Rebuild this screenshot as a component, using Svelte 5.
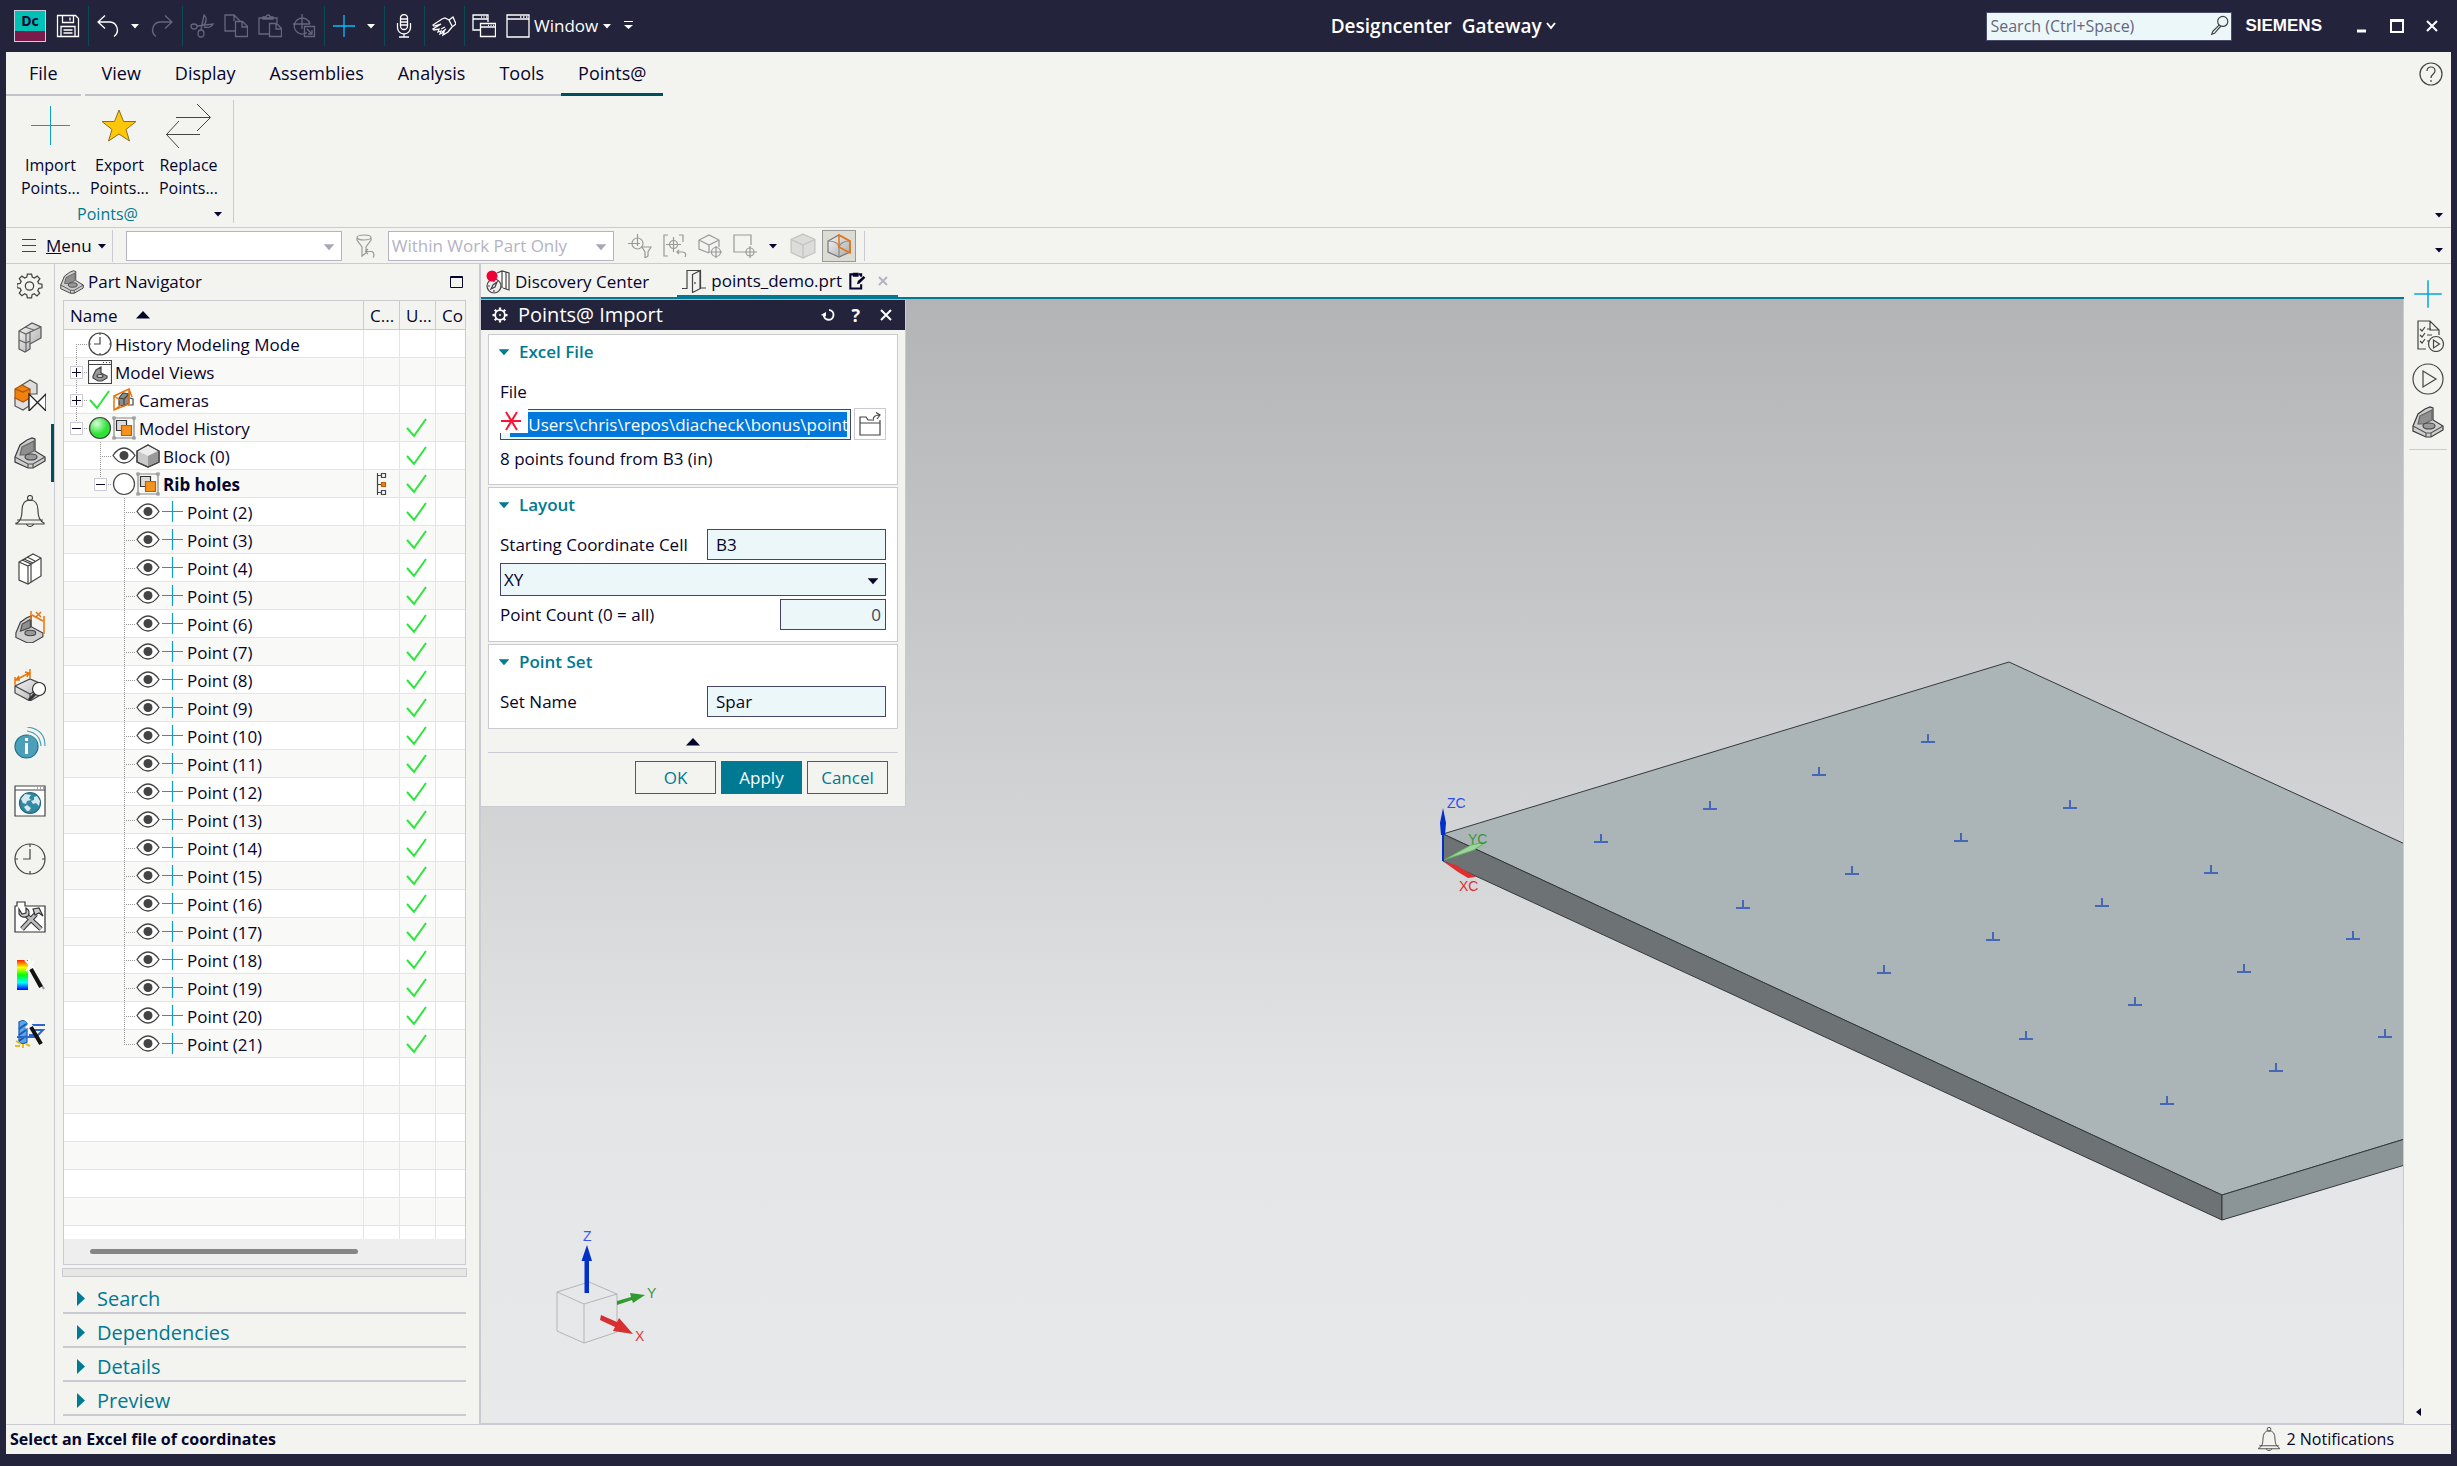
<script>
  const icons = {
    save: '<path d="M1.5 1.5h18l3 3v18h-21zM6.5 1.5v7h11v-7M14 3.500v3M5 22v-9.500h14V22M7.500 16h9M7.500 19h9"/>',
    undo: '<path d="M9 1.500L2 8l7 6.500M2 8h12a8 8 0 0 1 4 14.500"/>',
    redo: '<path d="M15 1.500L22 8l-7 6.500M22 8H10a8 8 0 0 0-4 14.500"/>',
    cut: '<ellipse cx="4" cy="12.500" rx="3" ry="2.500"/><ellipse cx="11" cy="19.500" rx="3" ry="3.500"/><path d="M7 12l16-2c-2 4-5 4-9 3M11 16L14 1c3 3 3 6 0 10"/>',
    copy: '<path d="M11 17H1V1h9l6 6M10 1v6M11.500 7.500h7l5 5v10h-12zM18 8v5h5"/>',
    paste: '<path d="M11 20H1V4h18v5M5 5V3h3a2 2 0 0 1 4 0h3v2zM11.500 9.500h7l5 5v8h-12zM18 10v5h5"/>',
    target: '<path d="M10 0v15M1 10h17M15 18.500A8 8 0 1 1 18 10M12.500 12.500h10v10h-10zM15 15l5 5M20 16v4h-4"/>',
    plus: '<path d="M12 1v22M1 12h22"/>',
    mic: '<rect x="8.500" y="0.500" width="7" height="15" rx="3.500"/><path d="M8.500 5h7M8.500 8h7M8.500 11h7M5.500 9v4.500a6.500 6.500 0 0 0 13 0V9M12 20v3M7 23h10"/>',
    hand: '<path d="M1 11l9-6 3-1 4 2 4-3 3 7-4 3-4 5-5 3 1-3-4 2 1-3-3 1 1-3-5 1-1-1 8-5-7 2zM10 18l4-3M9 15l4-2M17 6l3 6"/>',
    windows: '<path d="M8 16H1V1h15v7M1 5h15M9 3h1M11.500 3h1M14 3h1M8.500 9.500h15v13h-15zM8.500 13h15M16 11.300h1M18.500 11.300h1M21 11.300h1"/>',
    window: '<path d="M1 1h22v22H1zM1 5h22M14 3h1.500M17 3h1.500M20 3h1.500"/>',
    funnelBack: '<path d="M3 4v2l5 7v9l4-3v-6l5-7V4M14 15l-2.500 2.500L14 20M12 17.500h6a4 4 0 0 1 1 6"/><ellipse cx="10" cy="3.500" rx="7" ry="2.500"/>',
    targetFunnel: '<circle cx="9.500" cy="9.500" r="5.500"/><path d="M9.500 0v12M0 9.500h12M14 13h9l-3 5v4l-3 2v-6z"/>',
    bracketTarget: '<path d="M5 1H1v21h4M16 1h4v7M16 16l-2 2 2 2M14 18h6q4 1 2 5"/><circle cx="10.500" cy="10.500" r="4"/><path d="M10.500 3v15M3 10.500h15"/>',
    cubeTarget: '<path d="M11 19L1 15V6l10-5 10 5v7M1 6l10 5 10-5M11 11v8"/><circle cx="18" cy="18" r="4.500"/><path d="M18 12v12M12 18h12"/>',
    boxTarget: '<path d="M11 18H1V1h17v10"/><circle cx="17" cy="18" r="4"/><path d="M17 12v12M11 18h13"/>',
    greyCube: '<path fill="#dcdcda" stroke="#c4c4c2" d="M12 1l11 5v12l-11 5-11-5V6z"/><path stroke="#c4c4c2" d="M1 6l11 5 11-5M12 11v12"/>',
    sectionCube: '<path fill="url(#metal)" stroke="#777" d="M12 1l11 6v11l-11 5-11-5V7z"/><path stroke="#888" d="M1 7q10 0 11 6 2-6 11-6M12 13v10"/><path stroke="#e8740c" stroke-width="1.500" d="M12 1v12l11 6V7z"/>',
    gear: '<path d="M10 1h4l.7 3 2 .9L19.400 3 22 5.500 20 8.300l1 2 3 .5v3.400l-3 .6-1 2 1.800 2.700-2.600 2.500L16.500 20l-2 .9L14 24h-4l-.6-3-2-1-2.700 1.800L2.200 19.300 4 16.700l-1-2L0 14v-3.500L3 10l1-2-1.800-2.700L4.700 3l2.700 1.800 2-.8z"/><circle cx="12" cy="12.500" r="4"/>',
    bracket: '<path fill="#cfcfcf" stroke="#3a3a3a" d="M1 20L6 8 13 3l5-2 3 1v12l10 6v4l-12 7h-5L1 25z"/><path fill="#8f8f8f" stroke="#666" d="M6 18l2-8 12-6v10l-8 4z"/><path stroke="#555" d="M1 20l13 7h5l12-7M14 27v4M19 27v4"/><ellipse cx="17" cy="20" rx="6" ry="3" fill="#999" stroke="#444"/>',
    blocks: '<path fill="url(#metal)" stroke="#555" d="M5 10L18 2l9 4v11l-11 6v5l-5 3-6-3z"/><path stroke="#666" d="M5 10l7 3 15-7M12 13l4-2v12M12 13v17M5 19l7 3 4-2M11 6l9 3"/>',
    assembly: '<path fill="#ddd" stroke="#555" d="M8 6l8-5 7 4v10H8z"/><path fill="#e0e0e0" stroke="#555" d="M1 19h14v8l-6 4-8-4z"/><path fill="#f08010" stroke="#a8560a" d="M1 10l7-4 8 4v9l-7 4-8-4z"/><path stroke="#a8560a" d="M1 10l8 3 7-3"/><path fill="#fff" stroke="#222" stroke-width="1.300" d="M15 15v17l17-17v17z"/>',
    bell: '<path d="M3 28q5-3 5-12 0-11 8-11t8 11q0 9 6 12v1H2v-1zM3 25h26M12 29q4 5 8 0"/><circle cx="16" cy="3" r="2.500"/>',
    books: '<path fill="#fff" d="M5 9l14-8 8 4v18L14 31l-9-4z"/><path d="M5 9l9 4 13-8M14 13v18M8 7l9 4v18M10 6l9 4M13 4l8 4"/>',
    bracketDim: '<g transform="translate(1 4) scale(.9)"><path fill="#cfcfcf" stroke="#3a3a3a" d="M1 20L6 8 13 3l5-2v12l13 7v4l-12 7h-5L1 25z"/><path fill="#8f8f8f" d="M6 18l2-8 9-5v9z"/><ellipse cx="17" cy="20" rx="6" ry="3" fill="#999" stroke="#444"/></g><path stroke="#e8740c" stroke-width="1.500" d="M17 0v9M30 5v18M18 4l11 6M22 1l5 5M27 1l-5 5"/>',
    measure: '<path fill="url(#metal)" stroke="#444" d="M1 17l15-7 14 6v8l-14 8-15-8z"/><path stroke="#444" d="M1 17l15 8 14-8M16 25v7"/><path stroke="#e8740c" stroke-width="1.500" d="M1 8v8M16 0v9M2 11l13-7M5 7l-3 4h4M11 3l4 1-2 4"/><path stroke="#333" stroke-width="3" d="M21 25l-6 6"/><circle cx="25" cy="20" r="6.500" fill="#fff" stroke="#333"/>',
    info: '<circle cx="12.500" cy="19.500" r="11.500" fill="#4c9fb8" stroke="#1d6f88"/><path stroke="#fff" stroke-width="3" d="M12.500 11v3M12.500 16v11"/><path stroke="#4c9fb8" d="M13 0q18 2 18 19M13 4q13 2 14 15M14 8q8 2 9 10"/>',
    web: '<path fill="#fff" stroke="#444" d="M1 1h30v30H1z"/><path stroke="#444" d="M1 5h30M23 3h1M26 3h1M29 3h1"/><circle cx="16" cy="18" r="10.500" fill="#308aa3" stroke="#22697c"/><path fill="#d9e8ee" stroke="none" d="M7 14l4-5 6 1-2 3 2 2-4 1-1 3-3-1zM20 12l3-1 3 5-1 5-3-3-3 1-2-3 3-1zM10 22l3-2 4 3-2 3h-2z"/>',
    clock: '<circle cx="16" cy="16" r="15"/><path d="M16 6v10H9M16 1v3M16 28v3M1 16h3M28 16h3"/>',
    tools: '<path fill="#fff" stroke="#333" d="M1 5h2V1h8v4h20v26H1z"/><path stroke="#333" stroke-width="5" d="M8 28l14-15M11 13l16 15"/><path stroke="#bbb" stroke-width="3" d="M8 28l14-15M11 13l16 15"/><path stroke="#333" fill="#ccc" d="M5 8l3 5 4-1V7q5 3 2 8-6 3-9-2zM19 8l6-1 4 8-4-3-4 2z"/>',
    rainbow: '<rect x="3" y="1" width="11" height="30" fill="url(#spectrum)" stroke="none"/><path stroke="#fff" stroke-width="2" d="M11 1l10 10M20 2L12 12M15 0v13"/><path stroke="#999" stroke-width="2" d="M19 12l11 18"/><path stroke="#111" stroke-width="4" d="M17 10l10 18"/>',
    mill: '<path fill="#58a7ee" stroke="#1d5ab0" d="M5 5q4-3 8 0v20q-4 3-8 0z"/><path stroke="#1d5ab0" stroke-width="2" d="M5 12l7-5M5 18l7-5M5 24l7-5"/><path stroke="#2d66c8" stroke-width="2" d="M16 8h15M18 13h11l-5 5h-9M3 20h20"/><path stroke="#e7bd25" stroke-width="2" d="M2 24l5 3M1 29h5M9 27v4M12 27l4 2"/><path stroke="#fff" stroke-width="2" d="M11 2l10 10M19 3l-7 8"/><path stroke="#111" stroke-width="4" d="M17 10l10 17"/>',
    checklist: '<path d="M14 29H6V1h12l9 9v5M18 1v9h9M8 9l2 2 3-4M15 9h4M8 15l2 2 3-4M15 15h5M8 21l2 2 3-4M15 21h2"/><circle cx="24" cy="24" r="7.500"/><path d="M21.500 20v8l6-4z"/>',
    play: '<circle cx="16" cy="16" r="15"/><path d="M11 8v16l13-8z"/>',
    history: '<circle cx="12" cy="12" r="11" fill="#fff"/><path d="M12 5v7H6M12 1v2M12 21v2M1 12h2M21 12h2"/>',
    views: '<path fill="#fff" d="M.5.500h23v23H.500z"/><path d="M.5 4.500h23M15 2.500h1M18 2.500h1M21 2.500h1"/><path fill="#999" d="M5 16l3-6 5-3v6l6 3v2l-5 3h-4l-5-3z"/><ellipse cx="12" cy="16" rx="3" ry="1.500" fill="#ddd"/>',
    check: '<path stroke="#2be53b" stroke-width="2" d="M2 12l7 8L21 3"/>',
    camera: '<path fill="#8c8c8c" stroke="#444" d="M7 10l4-5 6 1v9l-5 3-5-1z"/><path stroke="#444" d="M7 10l5 1v7M12 11l5-5M18 10l3 1v6h-5"/><path stroke="#e8740c" stroke-width="1.500" d="M2 8L17 1v15L2 22zM2 8l6 4M17 1l3 8M2 22l7-5"/>',
    ball: '<circle cx="12" cy="12" r="10.500" fill="url(#ball)"/>',
    ring: '<circle cx="12" cy="12" r="10.500" fill="#fff"/>',
    feature: '<path stroke="#888" d="M2 2h20v20H2z"/><path fill="#fff" stroke="#888" d="M1 1h2v2H1zM21 1h2v2h-2zM1 21h2v2H1zM21 21h2v2h-2z"/><path fill="#ddd" stroke="#333" d="M4.500 4.500h10v10h-10z"/><path fill="#f4921e" stroke="#c85a00" d="M9.500 9.500h10v10h-10z"/>',
    eye: '<path stroke-width="1.300" d="M1 11.500Q6 4 12 4t11 7.500Q18 19 12 19T1 11.500z" fill="#fff"/><circle cx="12" cy="11.500" r="4.500" fill="#444" stroke="none"/>',
    block: '<path fill="#cacaca" d="M12 1l11 6v11l-11 5-11-5V7z"/><path fill="#ededed" stroke="none" d="M12 1.500L22 7l-10 5L2 7z"/><path fill="#999" stroke="none" d="M12 12l10-5v10.500L12 22z"/><path d="M12 1l11 6v11l-11 5-11-5V7z"/>',
    point: '<path stroke="#0f9fc4" d="M12.500 1v21M2 11.500h21"/>',
    deps: '<path d="M8.500 1v22M9 3.500h3M9 12.500h3M9 20.500h3M12.500 1.500h4v4h-4zM12.500 18.500h4v4h-4z"/><path fill="#f08010" stroke="#c85a00" d="M12.500 10.500h4v4h-4z"/>',
    discovery: '<path fill="#fff" d="M11 3l5-2 7 2v17l-6-2M16 1v17M20 2v17"/><circle cx="8" cy="16" r="7" fill="#eee"/><path d="M5 19l2-4 4-3-2 5zM8 10v2M8 20v2M2 16h2"/><circle cx="6" cy="6" r="5.500" fill="#f00035" stroke="none"/>',
    door: '<path d="M0 19.500h5V1.500h13V19h6M10.500 5.500l8-4v18l-8 4z"/><path d="M13 13v2"/>',
    edit: '<path stroke="#05052d" stroke-width="2.500" d="M11 4H4v17h13v-5M17 7V4h-3"/><path fill="#05052d" stroke="none" d="M7 2h7v5H7zM12 16l1-4 7-6 2 2-7 7z"/>',
    folder: '<path d="M2 22V5h6l2 3h4M2 11h20v12H2zM22 11V8M15 9q0-6 6-6M18 .5L22 3l-3 4"/>',
    search: '<circle cx="15" cy="7" r="5.500"/><path d="M11 11l-7 7M13 12l-7 8-3 1 1-3"/>',
    help: '<circle cx="12" cy="12" r="11"/><path d="M8 9q0-4 4-4t4 4c0 3-4 3-4 7M12 18v2"/>',
    reset: '<path stroke-width="2.500" d="M12 5.500h1A6.500 6.500 0 1 1 5 12"/><path fill="#fff" stroke="none" d="M1 12l7-4v6z"/>',
    settings: '<circle cx="12" cy="12" r="6.500" stroke-width="2.500"/><circle cx="12" cy="12" r="1.200" fill="#fff" stroke="none"/><path stroke-width="3" d="M12 2v3M12 19v3M2 12h3M19 12h3M5 5l2 2M17 17l2 2M5 19l2-2M17 7l2-2"/>',
  };

  const quickGroups = [
    ["undo", "caret", "redo"],
    ["cut", "copy", "paste", "target"],
    ["plus", "caret"],
    ["mic"],
    ["hand"],
  ];
  const disabled = ["redo", "cut", "copy", "paste", "target"];
  const tabs = ["View", "Display", "Assemblies", "Analysis", "Tools", "Points@"];
  const rail = [
    "blocks", "assembly", "bracket", "bell", "books", "bracketDim", "measure",
    "info", "web", "clock", "tools", "rainbow", "mill",
  ];

  const rows = [
    { depth: 0, icons: ["history"], name: "History Modeling Mode", first: true },
    { depth: 0, icons: ["views"], name: "Model Views", toggle: "+" },
    { depth: 0, icons: ["check", "camera"], name: "Cameras", toggle: "+" },
    { depth: 0, icons: ["ball", "feature"], name: "Model History", toggle: "-", last: true, ok: true },
    { depth: 1, icons: ["eye", "block"], name: "Block (0)", ok: true },
    { depth: 1, icons: ["ring", "feature"], name: "Rib holes", toggle: "-", last: true, ok: true, bold: true },
  ];
  for (let n = 2; n <= 21; n++) {
    rows.push({ depth: 2, icons: ["eye", "point"], name: `Point (${n})`, ok: true, last: n === 21 });
  }
  const emptyRows = Array(7).fill(0);
  const sections = ["Search", "Dependencies", "Details", "Preview"];

  // hole positions, 4 across the plate and 5 along it
  const points = [];
  for (let j = 0; j < 5; j++) {
    for (let i = 0; i < 4; i++) {
      points.push({ x: Math.round(1120 + i * 109 + j * 141.6), y: Math.round(543 - i * 33.3 + j * 65.5) });
    }
  }

  let fileName = $state("\\Users\\chris\\repos\\diacheck\\bonus\\point");
  let startCell = $state("B3");
  let plane = $state("XY");
  let count = $state("0");
  let setName = $state("Spar");
</script>

{#snippet icon(name, size = 24, box = 24)}
  <svg class="icon" width={size} height={size} viewBox="0 0 {box} {box}" aria-hidden="true">{@html icons[name]}</svg>
{/snippet}

{#snippet caret(dir = "down")}
  <svg class="caret {dir}" width="10" height="6" viewBox="0 0 10 6" aria-hidden="true"><path d="M1 1h8L5 5.500z" /></svg>
{/snippet}

<svg width="0" height="0" class="defs" aria-hidden="true">
  <defs>
    <linearGradient id="metal" x1="0" y1="0" x2="1" y2="1">
      <stop offset="0" stop-color="#f6f6f6" />
      <stop offset="1" stop-color="#a9a9a9" />
    </linearGradient>
    <linearGradient id="spectrum" x1="0" y1="0" x2="0" y2="1">
      <stop offset="0" stop-color="#f20" />
      <stop offset=".25" stop-color="#ff0" />
      <stop offset=".5" stop-color="#0f0" />
      <stop offset=".75" stop-color="#0ff" />
      <stop offset="1" stop-color="#00f" />
    </linearGradient>
    <radialGradient id="ball" cx=".35" cy=".3" r=".5">
      <stop offset="0" stop-color="#d8ffd8" />
      <stop offset="1" stop-color="#2ce336" />
    </radialGradient>
  </defs>
</svg>

<div class="app">
  <header class="titlebar">
    <div class="quick">
      <div class="logo"><span>Dc</span></div>
      <button aria-label="Save">{@render icon("save")}</button>
      {#each quickGroups as group}
        <i class="divider"></i>
        <div class="group">
          {#each group as name}
            {#if name === "caret"}
              <button aria-label="More">{@render caret()}</button>
            {:else}
              <button class={name} class:dim={disabled.includes(name)} aria-label={name}>{@render icon(name)}</button>
            {/if}
          {/each}
        </div>
      {/each}
      <i class="divider"></i>
      <div class="group">
        <button aria-label="Switch window">{@render icon("windows")}</button>
        <button class="window-menu">{@render icon("window")} Window {@render caret()}</button>
        <button aria-label="Toolbar options">
          <svg width="12" height="12" viewBox="0 0 12 12"><path d="M2 1.500h9" stroke="#fff" /><path d="M2 5h9l-4.500 4z" fill="#fff" /></svg>
        </button>
      </div>
    </div>
    <button class="title">Designcenter&nbsp; Gateway
      <svg width="10" height="8" viewBox="0 0 10 8"><path d="M1 1l4 5 4-5" fill="none" stroke="#fff" stroke-width="2" /></svg>
    </button>
    <div class="system">
      <div class="search">
        <input type="text" placeholder="Search (Ctrl+Space)" aria-label="Search" />
        {@render icon("search", 22)}
      </div>
      <b class="brand">SIEMENS</b>
      <div class="window-buttons">
        <button aria-label="Minimize"><svg width="14" height="14"><path d="M2 12h9" stroke-width="3" /></svg></button>
        <button aria-label="Maximize"><svg width="14" height="14"><path d="M1 1h12v12H1zM1 2h12" stroke-width="2" /></svg></button>
        <button aria-label="Close"><svg width="14" height="14"><path d="M2 2l10 10M12 2L2 12" stroke-width="2" /></svg></button>
      </div>
    </div>
  </header>

  <nav class="tabs">
    <button class="file">File</button>
    {#each tabs as tab}
      <button class:active={tab === "Points@"}>{tab}</button>
    {/each}
    <button class="help" aria-label="Help">{@render icon("help")}</button>
  </nav>

  <div class="ribbon">
    <div class="ribbon-group">
      <div class="commands">
        <button>
          <svg width="46" height="46"><path d="M22.500 3v39M3 22.500h39" stroke="#0f9fc4" /></svg>
          Import Points...
        </button>
        <button>
          <svg width="46" height="46"><path d="M22 7l4.500 11.500H39l-10 8L32.500 38 22 31 11.500 38 15 26.500l-10-8h12.500z" fill="#ffc708" stroke="#8a6d22" /></svg>
          Export Points...
        </button>
        <button>
          <svg width="46" height="46"><path d="M10 14.500h34M31 1l13.500 13.500L31 28M34 31.500H0M13 18L.5 31.500 13 45" fill="none" stroke="#444" /></svg>
          Replace Points...
        </button>
      </div>
      <div class="group-name"><span>Points@</span>{@render caret()}</div>
    </div>
    <button class="ribbon-options" aria-label="Ribbon options">{@render caret()}</button>
  </div>

  <div class="borderbar">
    <button class="menu">
      <svg width="14" height="15"><path d="M0 1.500h14M0 7.500h14M0 13.500h14" stroke="#444" /></svg>
      <span><u>M</u>enu</span>{@render caret()}
    </button>
    <div class="combo filter">
      <select aria-label="Type filter" disabled><option></option></select>
      {@render caret("wide")}
    </div>
    <button aria-label="Reset filters">{@render icon("funnelBack")}</button>
    <div class="combo scope">
      <select aria-label="Selection scope" disabled><option>Within Work Part Only</option></select>
      {@render caret("wide")}
    </div>
    <div class="select-tools">
      <button aria-label="General selection">{@render icon("targetFunnel")}</button>
      <button aria-label="Restore selection">{@render icon("bracketTarget")}</button>
      <button aria-label="Select body">{@render icon("cubeTarget")}</button>
      <button aria-label="Select by box">{@render icon("boxTarget")}</button>
      <button aria-label="More selection tools">{@render caret()}</button>
    </div>
    <button aria-label="Shaded">{@render icon("greyCube", 26)}</button>
    <button class="pressed" aria-label="Section">{@render icon("sectionCube")}</button>
    <i class="end"></i>
    <button class="bar-options" aria-label="Toolbar options">{@render caret()}</button>
  </div>

  <div class="workspace">
    <nav class="rail">
      <button class="gear" aria-label="Settings">{@render icon("gear", 26, 25)}</button>
      {#each rail as name}
        <button class:current={name === "bracket"} aria-label={name}>{@render icon(name, 32, 32)}</button>
      {/each}
    </nav>

    <aside class="navigator">
      <h2>
        {@render icon("bracket", 24, 32)} Part Navigator
        <button aria-label="Float panel"><svg width="14" height="14"><path d="M.5 1.500h12v11H.5zM.5 2.500h12" fill="none" stroke="#05052d" /></svg></button>
      </h2>
      <div class="tree">
        <div class="clip">
          <table>
            <thead>
              <tr>
                <th class="name">Name <svg width="14" height="8"><path d="M0 7.500L7 0l7 7.500z" fill="#05052d" /></svg></th>
                <th class="narrow">C...</th>
                <th class="narrow">U...</th>
                <th>Co</th>
              </tr>
            </thead>
            <tbody>
              {#each rows as row}
                <tr>
                  <td>
                    <div class="node">
                      <svg class="guide" width={24 * (row.depth + 1)} height="28">
                        <g transform="translate({24 * row.depth} 0)">
                          <path d="M12.500 {row.first ? 14 : 0}V{row.last ? 14 : 28}M12 14.500h12" stroke="#999" stroke-dasharray="1 1" />
                          {#if row.toggle}
                            <path d="M6.500 8.500h12v12h-12z" fill="#fff" stroke="#cbcad3" />
                            <path d="M8 14.500h9{row.toggle === '+' ? 'M12.500 10v9' : ''}" stroke="#05052d" />
                          {/if}
                        </g>
                      </svg>
                      {#each row.icons as name}{@render icon(name)}{/each}
                      <span class:bold={row.bold}>{row.name}</span>
                    </div>
                  </td>
                  <td>{#if row.bold}{@render icon("deps")}{/if}</td>
                  <td>{#if row.ok}{@render icon("check")}{/if}</td>
                  <td></td>
                </tr>
              {/each}
              {#each emptyRows as _}
                <tr><td></td><td></td><td></td><td></td></tr>
              {/each}
            </tbody>
          </table>
        </div>
        <div class="scrollbar"><i></i></div>
      </div>
      <div class="splitter"></div>
      {#each sections as section}
        <button class="section">
          <svg width="8" height="15"><path d="M0 0l8 7.500L0 15z" fill="#007993" /></svg>{section}
        </button>
      {/each}
    </aside>

    <main>
      <div class="doc-tabs">
        <button>{@render icon("discovery")} Discovery Center</button>
        <button class="active">
          {@render icon("door")} points_demo.prt {@render icon("edit", 20)}
          <svg class="x" width="10" height="10"><path d="M1 1l8 8M9 1L1 9" stroke="#b4b3c0" stroke-width="2" /></svg>
        </button>
      </div>

      <div class="viewport">
        <svg class="scene" width="100%" height="100%">
          <g stroke="#34393b" stroke-width="1">
            <path d="M962 535L1528 363 2100 626V786L1741 896z" fill="#abb4b7" />
            <path d="M962 535L1741 896v25L962 562z" fill="#6d7375" />
            <path d="M1741 896L2100 786v27L1741 921z" fill="#8b9497" />
          </g>
          {#each points as p}
            <path d="M{p.x - 7} {p.y}h14M{p.x} {p.y}v-8" stroke="#4468b6" stroke-width="2" />
          {/each}
          <path d="M962 562V516" stroke="#0030c8" stroke-width="2" />
          <path d="M962 509l3 15-1 12h-4l-1-12z" fill="#0030c8" />
          <path d="M963 561l27-15 15-3-12 8z" fill="#9bd79b" stroke="#64ae64" />
          <path d="M963 563l12 3 20 12-8 1-10-6z" fill="#dc3030" />
          <path d="M76 993l32-10 28 12v38l-33 11-27-12zM76 993l27 12 33-10M103 1005v39" fill="none" stroke="#b4b5b7" />
          <path d="M103.500 994v-32h-3l5.500-16 5 16h-3v32z" fill="#0030c8" />
          <path d="M136 1002l14-4-1-4 15 2-12 8-1-3-15 5z" fill="#319b31" />
          <path d="M120 1016l16 7 2-4 14 16-20-3 2-4-15-7z" fill="#d83030" />
          <g class="axes">
            <text x="966" y="509" fill="#2c4cf0">ZC</text>
            <text x="987" y="545" fill="#36963c">YC</text>
            <text x="978" y="592" fill="#dc3030">XC</text>
            <text x="102" y="942" fill="#3c55f0">Z</text>
            <text x="166" y="999" fill="#419641">Y</text>
            <text x="154" y="1042" fill="#d83b3b">X</text>
          </g>
        </svg>

        <form class="dialog" onsubmit={(e) => e.preventDefault()}>
          <header>
            {@render icon("settings", 18)}
            <h3>Points@ Import</h3>
            <button type="button" aria-label="Reset">{@render icon("reset", 18)}</button>
            <button type="button" aria-label="Help"><b>?</b></button>
            <button type="button" aria-label="Close"><svg width="14" height="14"><path d="M2 2l10 10M12 2L2 12" stroke="#fff" stroke-width="2" /></svg></button>
          </header>
          <fieldset>
            <h4>{@render caret("wide")} Excel File</h4>
            <label for="file">File</label>
            <div class="row file-row">
              <div class="file-field">
                <input id="file" type="text" bind:value={fileName} />
                <svg class="required" width="28" height="24"><path d="M1 12h20M6 3l11 18M17 3L6 21" stroke="#fa1432" stroke-width="2" /></svg>
              </div>
              <button type="button" class="browse" aria-label="Browse">{@render icon("folder")}</button>
            </div>
            <p>8 points found from B3 (in)</p>
          </fieldset>
          <fieldset>
            <h4>{@render caret("wide")} Layout</h4>
            <div class="row">
              <label for="cell">Starting Coordinate Cell</label>
              <input id="cell" type="text" bind:value={startCell} />
            </div>
            <div class="combo plane">
              <select aria-label="Layout plane" bind:value={plane}><option>XY</option></select>
              {@render caret("wide")}
            </div>
            <div class="row">
              <label for="count">Point Count (0 = all)</label>
              <input id="count" class="number" type="text" bind:value={count} />
            </div>
          </fieldset>
          <fieldset>
            <h4>{@render caret("wide")} Point Set</h4>
            <div class="row">
              <label for="set">Set Name</label>
              <input id="set" type="text" bind:value={setName} />
            </div>
          </fieldset>
          <button type="button" class="fold" aria-label="Less"><svg width="14" height="8"><path d="M0 7.500L7 0l7 7.500z" fill="#05052d" /></svg></button>
          <footer>
            <button type="button">OK</button>
            <button type="submit" class="primary">Apply</button>
            <button type="button">Cancel</button>
          </footer>
        </form>
      </div>
    </main>

    <nav class="tools-right">
      <button class="add" aria-label="Add">{@render icon("plus", 30)}</button>
      <button aria-label="Checklist">{@render icon("checklist", 32, 32)}</button>
      <button aria-label="Play">{@render icon("play", 32, 32)}</button>
      <button aria-label="Part">{@render icon("bracket", 32, 32)}</button>
      <hr />
      <button class="collapse" aria-label="Collapse"><svg width="5" height="8"><path d="M5 0v8L0 4z" fill="#05052d" /></svg></button>
    </nav>
  </div>

  <footer class="status">
    <b>Select an Excel file of coordinates</b>
    <button>{@render icon("bell", 24, 32)} 2 Notifications</button>
  </footer>
</div>

<style>
  :global(body) {
    overflow: hidden;
  }

  .app {
    --ink: #05052d;
    --navy: #23233b;
    --paper: #f3f4ef;
    --line: #cbcad3;
    --teal: #007993;
    display: flex;
    flex-direction: column;
    box-sizing: border-box;
    height: 100vh;
    padding: 0 6px 12px;
    background: var(--navy);
    color: var(--ink);
    font: 17px/24px "Open Sans", "Noto Sans", sans-serif;
  }

  .app * {
    box-sizing: border-box;
  }

  .defs {
    position: absolute;
  }

  button {
    display: flex;
    align-items: center;
    padding: 0;
    border: 0;
    background: none;
    color: inherit;
    font: inherit;
  }

  input,
  select {
    min-width: 0;
    color: inherit;
    font: inherit;
    border-radius: 0;
    outline: 0;
  }

  svg {
    display: block;
    flex: none;
  }

  .icon {
    fill: none;
    stroke: #444;
    stroke-width: 1.2;
  }

  .caret {
    fill: currentColor;
  }

  .caret.wide {
    width: 14px;
    height: 8px;
  }

  /* title bar */
  .titlebar {
    display: flex;
    align-items: center;
    flex: none;
    height: 52px;
    color: #fff;
  }

  .titlebar .icon {
    stroke: currentColor;
    stroke-width: 1.3;
  }

  .quick {
    display: flex;
    align-items: center;
    flex: 25 1 0;
    padding-left: 8px;
  }

  .logo {
    width: 32px;
    height: 32px;
    margin-right: 10px;
    border: 1px solid #ccd;
    background: linear-gradient(#00c1b6 66%, #7b1b4b 66%);
    color: var(--ink);
    font-size: 14px;
    font-weight: 700;
    line-height: 20px;
    text-align: center;
  }

  .divider {
    width: 16px;
    height: 40px;
    background: linear-gradient(#0a4a55, #0a4a55) center / 1px 100% no-repeat;
  }

  .group {
    display: flex;
    align-items: center;
    gap: 10px;
  }

  .group .dim {
    color: #66667d;
  }

  .group .plus {
    color: #00bfff;
  }

  .window-menu {
    gap: 4px;
  }

  .title {
    gap: 4px;
    font-size: 19px;
    font-weight: 600;
  }

  .system {
    display: flex;
    align-items: center;
    justify-content: flex-end;
    flex: 17 1 0;
  }

  .search {
    display: flex;
    align-items: center;
    width: 246px;
    height: 29px;
    border: 1px solid #4b4b6b;
    background: #ebf7f8;
    color: #444;
  }

  .search input {
    flex: 1;
    padding: 0 3px;
    border: 0;
    background: none;
    font-size: 16px;
  }

  .search input::placeholder {
    color: #666681;
    opacity: 1;
  }

  .brand {
    margin-left: 13px;
    font: 700 17px "Liberation Sans", Arial, sans-serif;
  }

  .window-buttons {
    display: flex;
    gap: 21px;
    margin: 0 12px 0 33px;
    fill: none;
    stroke: #fff;
  }

  /* ribbon */
  .tabs {
    display: flex;
    flex: none;
    height: 44px;
    background: var(--paper);
    font-size: 18px;
  }

  .tabs button {
    padding: 0 17px;
    border-bottom: 2px solid #c3c1cc;
  }

  .tabs .file {
    margin-right: 4px;
    padding: 0 23px;
  }

  .tabs .active {
    border-bottom: 3px solid #00505c;
  }

  .tabs .help {
    margin-left: auto;
    padding: 0 8px 0 0;
    border: 0;
  }

  .ribbon {
    display: flex;
    flex: none;
    justify-content: space-between;
    height: 132px;
    border-bottom: 1px solid var(--line);
    background: var(--paper);
    font-size: 16px;
  }

  .ribbon-group {
    display: flex;
    flex-direction: column;
    justify-content: space-between;
    margin: 4px 0;
    padding: 3px 10px 0;
    border-right: 1px solid var(--line);
  }

  .commands {
    display: flex;
  }

  .commands button {
    flex-direction: column;
    gap: 5px;
    width: 69px;
    line-height: 23px;
    text-align: center;
  }

  .group-name {
    display: flex;
    align-items: center;
    line-height: 18px;
  }

  .group-name span {
    flex: 1;
    padding-right: 14px;
    color: var(--teal);
    text-align: center;
  }

  .ribbon-options {
    align-self: flex-end;
    padding: 0 7px 9px 0;
  }

  .borderbar {
    display: flex;
    align-items: center;
    flex: none;
    height: 36px;
    border-bottom: 1px solid var(--line);
    background: var(--paper);
  }

  .borderbar .icon {
    stroke: #999;
  }

  .menu {
    gap: 5px;
    height: 32px;
    margin-right: 13px;
    padding: 0 5px 0 16px;
    border-right: 1px solid var(--line);
  }

  .menu span {
    padding-left: 5px;
  }

  .combo {
    position: relative;
  }

  .combo select {
    appearance: none;
    width: 100%;
    height: 30px;
    padding: 0 3px;
    border: 1px solid #b4b3c3;
    background: #fff;
    color: #b4b3c3;
    opacity: 1;
  }

  .combo .caret {
    position: absolute;
    top: 50%;
    right: 6px;
    margin-top: -3px;
    color: #a9a8b8;
    pointer-events: none;
  }

  .filter {
    width: 216px;
    margin-right: 12px;
  }

  .scope {
    width: 226px;
    margin: 0 14px 0 10px;
  }

  .select-tools {
    display: flex;
    align-items: center;
    gap: 11px;
    margin-right: 12px;
  }

  .pressed {
    justify-content: center;
    width: 34px;
    height: 32px;
    margin-left: 6px;
    border: 1px solid #999;
    background: #dcdcd4;
  }

  .end {
    height: 30px;
    margin-left: 8px;
    border-left: 1px solid var(--line);
  }

  .bar-options {
    align-self: flex-end;
    margin-left: auto;
    padding: 0 7px 10px 0;
  }

  /* left side */
  .workspace {
    display: flex;
    flex: 1;
    min-height: 0;
    background: var(--paper);
  }

  .rail {
    width: 49px;
    border-right: 1px solid var(--line);
  }

  .rail button {
    justify-content: center;
    width: 100%;
    height: 58px;
    padding-left: 3px;
    border-right: 3px solid transparent;
  }

  .rail .gear {
    height: 44px;
  }

  .rail .current {
    border-color: #00505c;
  }

  .navigator {
    display: flex;
    flex-direction: column;
    width: 426px;
    padding: 0 13px 8px 8px;
    border-right: 2px solid var(--line);
  }

  h2,
  h3,
  h4,
  p {
    margin: 0;
    font-size: inherit;
    font-weight: 400;
  }

  h2 {
    display: flex;
    align-items: center;
    gap: 4px;
    height: 36px;
    margin-left: -3px;
  }

  h2 button {
    margin: 0 2px 0 auto;
  }

  .tree {
    display: flex;
    flex: 1;
    flex-direction: column;
    min-height: 0;
    border: 1px solid var(--line);
  }

  .clip {
    flex: 1;
    min-height: 0;
    overflow: hidden;
    background: #fff;
  }

  table {
    width: 100%;
    border-collapse: separate;
    border-spacing: 0;
    table-layout: fixed;
  }

  th {
    height: 29px;
    padding: 1px 0 0 6px;
    border-right: 1px solid var(--line);
    border-bottom: 1px solid var(--line);
    background: var(--paper);
    font-weight: 400;
    line-height: 27px;
    text-align: left;
    white-space: nowrap;
    overflow: hidden;
  }

  th svg {
    display: inline-block;
    margin: 0 0 4px 14px;
    vertical-align: middle;
  }

  th.name {
    width: 300px;
  }

  th.narrow {
    width: 36px;
  }

  td {
    height: 28px;
    padding: 0;
    border-right: 1px solid #e4e4e0;
    border-bottom: 1px solid #e4e4e0;
  }

  td > :global(.icon) {
    margin-left: 5px;
  }

  th:last-child,
  td:last-child {
    border-right: 0;
  }

  tbody tr:nth-child(even) {
    background: #f9f9f7;
  }

  .node {
    display: flex;
    align-items: center;
    height: 27px;
    white-space: nowrap;
  }

  .node span {
    padding: 2px 0 0 3px;
  }

  .guide {
    fill: none;
  }

  .bold {
    font-weight: 700;
  }

  .scrollbar {
    height: 25px;
    padding: 10px 107px 0 26px;
    background: #eee;
  }

  .scrollbar i {
    display: block;
    height: 5px;
    border-radius: 3px;
    background: #858585;
  }

  .splitter {
    flex: none;
    height: 9px;
    margin: 3px -1px;
    border: 1px solid var(--line);
    background: #e6e7e2;
  }

  .section {
    flex: none;
    gap: 12px;
    height: 34px;
    padding: 5px 0 0 14px;
    border-bottom: 2px solid var(--line);
    color: var(--teal);
    font-size: 20px;
  }

  /* documents */
  main {
    display: flex;
    flex: 1;
    flex-direction: column;
    min-width: 0;
  }

  .doc-tabs {
    display: flex;
    flex: none;
    gap: 18px;
    height: 35px;
    border-bottom: 2px solid var(--teal);
  }

  .doc-tabs button {
    gap: 5px;
    padding: 2px 10px 0 5px;
  }

  .doc-tabs .active {
    border-bottom: 2px solid var(--teal);
  }

  .doc-tabs .x {
    margin-left: 6px;
  }

  .viewport {
    position: relative;
    flex: 1;
    min-height: 0;
    overflow: hidden;
    border-right: 1px solid var(--line);
    border-bottom: 1px solid var(--line);
    background: linear-gradient(#b3b4b6, #cbccce 35%, #e4e5e7 72%, #e8e9eb);
  }

  .axes {
    font: 14px "Liberation Sans", Arial, sans-serif;
  }

  .dialog {
    position: absolute;
    top: 1px;
    left: 0;
    width: 425px;
    padding-bottom: 12px;
    border: 1px solid var(--line);
    border-top: 0;
    border-left: 0;
    background: var(--paper);
  }

  .dialog header {
    display: flex;
    align-items: center;
    gap: 9px;
    height: 30px;
    margin-bottom: 4px;
    padding: 0 12px 0 10px;
    background: var(--navy);
    color: #fff;
    font-size: 20px;
  }

  .dialog header .icon {
    stroke: #fff;
  }

  .dialog header b {
    font-size: 18px;
  }

  .dialog header button {
    margin-left: 4px;
  }

  .dialog header button:last-child {
    margin-left: 10px;
  }

  h3 {
    flex: 1;
  }

  fieldset {
    display: flex;
    flex-direction: column;
    margin: 0 7px 2px;
    padding: 0 11px 11px;
    border: 1px solid var(--line);
    background: #fff;
  }

  h4 {
    display: flex;
    align-items: center;
    gap: 8px;
    height: 34px;
    margin: 0 0 7px -3px;
    color: var(--teal);
    font-weight: 600;
  }

  fieldset > label {
    height: 32px;
    line-height: 32px;
  }

  .row {
    display: flex;
    align-items: center;
    justify-content: space-between;
  }

  .row > input {
    width: 179px;
    height: 31px;
    padding: 0 8px;
    border: 1px solid #45456a;
    background: #ebf7f8;
  }

  .row > .number {
    width: 106px;
    padding: 0 4px;
    color: #45455e;
    text-align: right;
  }

  .file-field {
    position: relative;
    flex: 1;
    height: 31px;
    margin-right: 3px;
    padding: 2px 3px 2px 9px;
    border: 1px solid #45456a;
    background: #ebf7f8;
  }

  .file-field input {
    display: block;
    width: 100%;
    height: 25px;
    padding: 0 0 0 12px;
    border: 0;
    background: #0078dc;
    color: #fff;
  }

  .required {
    position: absolute;
    top: -1px;
    left: -1px;
    background: #fff;
    fill: none;
  }

  .browse {
    justify-content: center;
    width: 32px;
    height: 32px;
    border: 1px solid var(--line);
  }

  p {
    height: 30px;
    margin-top: 3px;
    line-height: 32px;
  }

  .plane {
    margin: 3px 0;
  }

  .plane select {
    height: 33px;
    border-color: #45456a;
    background: #ebf7f8;
    color: var(--ink);
  }

  .plane .caret {
    color: var(--ink);
  }

  .fold {
    justify-content: center;
    width: 410px;
    height: 22px;
    margin-left: 7px;
    border-bottom: 1px solid var(--line);
  }

  .dialog footer {
    display: flex;
    justify-content: flex-end;
    gap: 5px;
    padding: 8px 17px 0;
  }

  .dialog footer button {
    justify-content: center;
    width: 81px;
    height: 33px;
    border: 1px solid var(--teal);
    color: var(--teal);
  }

  .dialog footer .primary {
    background: var(--teal);
    color: #fff;
  }

  /* right side */
  .tools-right {
    display: flex;
    flex-direction: column;
    align-items: center;
    gap: 11px;
    width: 47px;
    padding: 15px 0 8px;
  }

  .tools-right .add :global(.icon) {
    stroke: #00a8d8;
  }

  .tools-right hr {
    width: 38px;
    margin: 0;
    border: 0;
    border-top: 1px solid var(--line);
  }

  .collapse {
    margin: auto 18px 0 0;
  }

  .status {
    display: flex;
    align-items: center;
    justify-content: space-between;
    flex: none;
    height: 30px;
    padding: 0 57px 2px 4px;
    border-top: 1px solid var(--line);
    background: var(--paper);
    font-size: 16px;
  }

  .status button {
    gap: 6px;
  }
</style>
